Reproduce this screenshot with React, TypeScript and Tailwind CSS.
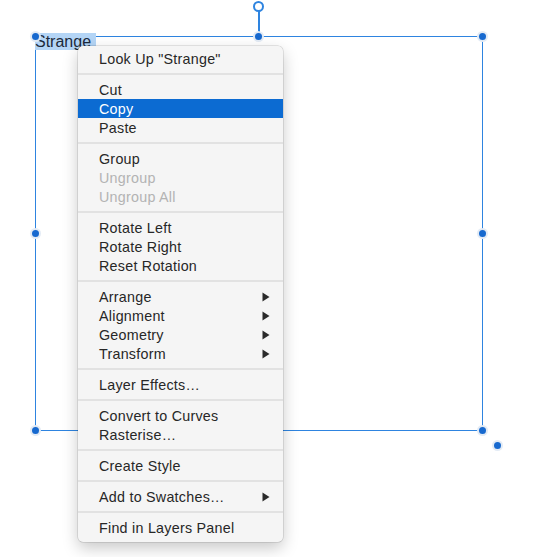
import React from "react";

type Item = { label: string; disabled?: boolean; active?: boolean; sub?: boolean };
type Entry = Item | "sep";

const entries: Entry[] = [
  { label: 'Look Up "Strange"' },
  "sep",
  { label: "Cut" },
  { label: "Copy", active: true },
  { label: "Paste" },
  "sep",
  { label: "Group" },
  { label: "Ungroup", disabled: true },
  { label: "Ungroup All", disabled: true },
  "sep",
  { label: "Rotate Left" },
  { label: "Rotate Right" },
  { label: "Reset Rotation" },
  "sep",
  { label: "Arrange", sub: true },
  { label: "Alignment", sub: true },
  { label: "Geometry", sub: true },
  { label: "Transform", sub: true },
  "sep",
  { label: "Layer Effects…" },
  "sep",
  { label: "Convert to Curves" },
  { label: "Rasterise…" },
  "sep",
  { label: "Create Style" },
  "sep",
  { label: "Add to Swatches…", sub: true },
  "sep",
  { label: "Find in Layers Panel" },
];

function Arrow({ color }: { color: string }) {
  return (
    <svg width="8" height="10" viewBox="0 0 8 10" className="shrink-0">
      <polygon points="0.5,0.5 7.5,5 0.5,9.5" fill={color} />
    </svg>
  );
}

function Handle({ cls }: { cls: string }) {
  return (
    <div
      className={`absolute w-[7px] h-[7px] rounded-full bg-[#1769cf] shadow-[0_0_0_2px_rgba(226,234,244,0.95)] ${cls}`}
    />
  );
}

export default function App() {
  return (
    <div className="relative w-[555px] h-[557px] overflow-hidden bg-white">
      {/* selection rectangle */}
      <div className="absolute left-[35px] top-[36px] w-[448px] h-[395px] border-[1.5px] border-[#2e84e0]" />
      {/* rotation handle */}
      <div className="absolute left-[258px] top-[11px] w-[1.5px] h-[25px] bg-[#2e84e0]" />
      <div className="absolute left-[253px] top-[1px] w-[11px] h-[11px] rounded-full border-2 border-[#2e84e0] bg-white" />

      {/* text */}
      <div
        className="absolute left-[35px] top-[33px] h-[17px] w-[61px] bg-[#b4d5f6] text-[16px] leading-[18px] text-[#1d2a3b]"
        style={{ fontFamily: '"Liberation Sans", Arial, sans-serif' }}
      >
        Strange
      </div>

      {/* handles */}
      <Handle cls="left-[32px] top-[33px]" />
      <Handle cls="left-[255px] top-[33px]" />
      <Handle cls="left-[479px] top-[33px]" />
      <Handle cls="left-[32px] top-[230px]" />
      <Handle cls="left-[479px] top-[230px]" />
      <Handle cls="left-[32px] top-[427px]" />
      <Handle cls="left-[255px] top-[427px]" />
      <Handle cls="left-[479px] top-[427px]" />
      <Handle cls="left-[494px] top-[442px]" />

      {/* context menu */}
      <div
        className="absolute left-[78px] top-[46px] w-[205px] rounded-[5px] bg-[#f5f5f5] pt-[3px] pb-[5px] shadow-[0_0_0_0.5px_rgba(0,0,0,0.18),0_6px_16px_rgba(0,0,0,0.22)] text-[14.3px] tracking-[0.25px]"
        style={{ fontFamily: '"Liberation Sans", Arial, sans-serif' }}
      >
        {entries.map((e, i) =>
          e === "sep" ? (
            <div key={i} className="h-[12px] flex items-center">
              <div className="w-full h-[2px] bg-[#e2e2e2]" />
            </div>
          ) : (
            <div
              key={i}
              className={`h-[19px] flex items-center justify-between pl-[21px] pr-[13px] pt-[1px] leading-[18px] ${
                e.active
                  ? "bg-[#0c6bd2] text-white"
                  : e.disabled
                  ? "text-[#b3b3b3]"
                  : "text-[#272727]"
              }`}
            >
              <span>{e.label}</span>
              {e.sub && <Arrow color={e.active ? "#ffffff" : "#2a2a2a"} />}
            </div>
          )
        )}
      </div>
    </div>
  );
}
